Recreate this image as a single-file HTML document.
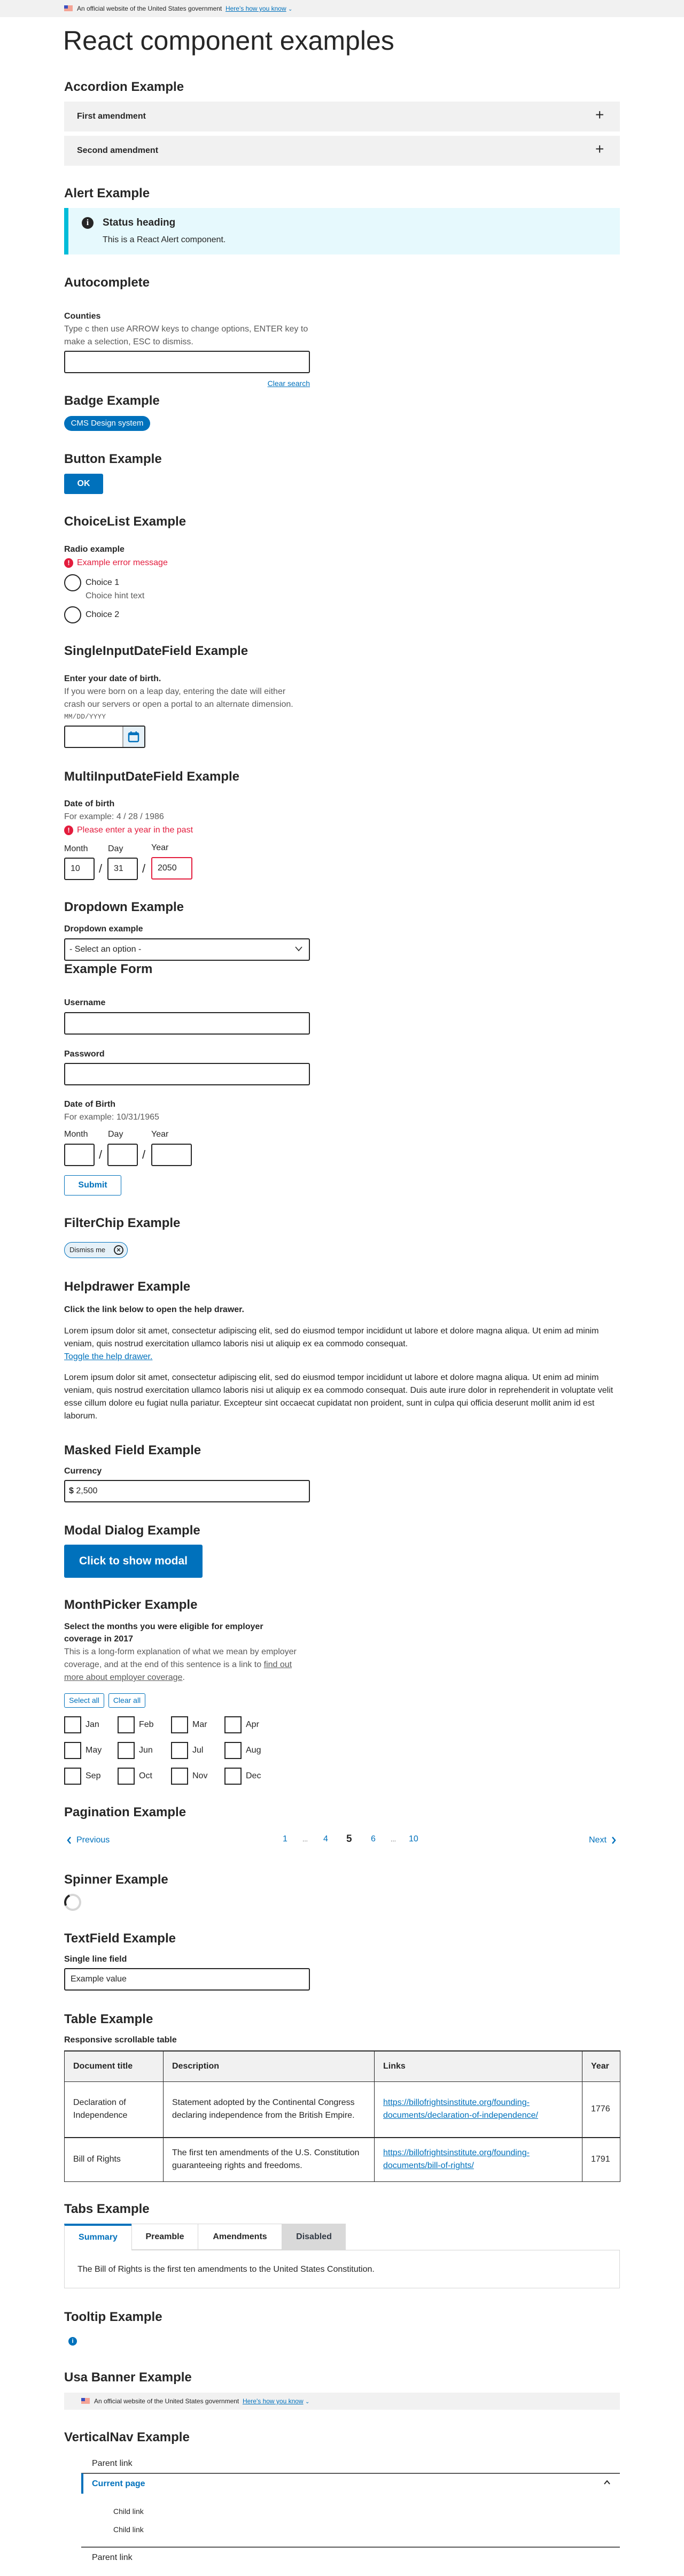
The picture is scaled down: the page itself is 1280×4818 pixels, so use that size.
<!DOCTYPE html>
<html><head><meta charset="utf-8">
<style>
*{box-sizing:border-box;margin:0;padding:0}
html,body{width:1280px;height:4818px;background:#fff;overflow:hidden}
body{position:relative;font-family:"Liberation Sans",Arial,sans-serif;color:#262626;font-size:16px}
.a{position:absolute;white-space:nowrap}
h2{position:absolute;left:120px;font-size:24px;font-weight:700;line-height:30px;white-space:nowrap}
.lb{position:absolute;left:120px;font-weight:700;font-size:16px;line-height:24px;white-space:nowrap}
.h{position:absolute;left:120px;color:#5a5a5a;font-size:16px;line-height:24px;white-space:nowrap}
.in{position:absolute;left:120px;width:460px;height:42px;border:2px solid #262626;border-radius:3px;background:#fff}
.err{position:absolute;left:120px;color:#e31c3d;font-size:16px;line-height:24px;white-space:nowrap;padding-left:24px}
.err:before{content:"!";position:absolute;left:0;top:3px;width:17px;height:18px;border-radius:50%;background:#e31c3d;color:#fff;font-weight:700;font-size:13px;line-height:18px;text-align:center}
.box{position:absolute;height:42px;border:2px solid #262626;border-radius:3px;background:#fff;font-size:16px;line-height:38px;padding-left:10px}
.sl{position:absolute;font-size:22px;line-height:30px;color:#262626}
.cb{position:absolute;width:32px;height:32px;border:2px solid #262626;background:#fff}
.cbl{position:absolute;font-size:16px;line-height:24px}
a,.lk{color:#0071bc;text-decoration:underline}
table.t{position:absolute;white-space:normal;table-layout:fixed}
td,th{border:1px solid #262626;vertical-align:middle;text-align:left;padding:0 16px;font-size:16px;line-height:24px;overflow-wrap:anywhere}
th{background:#f1f1f1;font-weight:700}
</style></head><body>

<div class="a" style="left:0;top:0;width:1280px;height:32px;background:#f1f1f1"></div>
<div class="a" style="left:120px;top:10px;width:16px;height:11px;background:#f4a395"><div style="width:7px;height:6px;background:#3b4fbf"></div></div>
<div class="a" style="left:144px;top:8px;font-size:12px;line-height:16px;color:#262626">An official website of the United States government&nbsp; <span class="lk">Here's how you know</span> <span style="color:#0071bc;font-size:10px">&#8964;</span></div>

<div class="a" style="left:118px;top:46px;font-size:50px;line-height:60px;color:#262626">React component examples</div>

<h2 style="top:148px">Accordion Example</h2>
<div class="a" style="left:120px;top:190px;width:1040px;height:56px;background:#f1f1f1"></div>
<div class="a" style="left:144px;top:207px;font-weight:700;line-height:22px">First amendment</div>
<div class="a" style="left:1114px;top:200px;font-size:28px;line-height:30px">+</div>
<div class="a" style="left:120px;top:254px;width:1040px;height:56px;background:#f1f1f1"></div>
<div class="a" style="left:144px;top:271px;font-weight:700;line-height:22px">Second amendment</div>
<div class="a" style="left:1114px;top:264px;font-size:28px;line-height:30px">+</div>

<h2 style="top:347px">Alert Example</h2>
<div class="a" style="left:120px;top:389px;width:1040px;height:87px;background:#e6f9fd;border-left:8px solid #00bcd9"></div>
<div class="a" style="left:153px;top:406px;width:22px;height:22px;border-radius:50%;background:#262626;color:#fff;font-weight:700;font-family:'Liberation Serif',serif;font-size:16px;line-height:22px;text-align:center">i</div>
<div class="a" style="left:192px;top:405px;font-weight:700;font-size:19px;line-height:24px">Status heading</div>
<div class="a" style="left:192px;top:437px;line-height:24px">This is a React Alert component.</div>

<h2 style="top:514px">Autocomplete</h2>
<div class="lb" style="top:580px">Counties</div>
<div class="h" style="top:604px">Type c then use ARROW keys to change options, ENTER key to</div>
<div class="h" style="top:628px">make a selection, ESC to dismiss.</div>
<div class="in" style="top:656px"></div>
<div class="a" style="left:480px;width:100px;text-align:right;top:708px;font-size:14px;line-height:18px"><span class="lk">Clear search</span></div>

<h2 style="top:735px">Badge Example</h2>
<div class="a" style="left:120px;top:778px;width:161px;height:28px;border-radius:14px;background:#0071bc;color:#fff;font-size:15px;line-height:28px;text-align:center">CMS Design system</div>

<h2 style="top:844px">Button Example</h2>
<div class="a" style="left:120px;top:886px;width:73px;height:38px;background:#0071bc;color:#fff;font-weight:700;font-size:16px;line-height:38px;text-align:center;border-radius:3px">OK</div>

<h2 style="top:961px">ChoiceList Example</h2>
<div class="lb" style="top:1016px">Radio example</div>
<div class="err" style="top:1041px">Example error message</div>
<div class="a" style="left:120px;top:1074px;width:32px;height:32px;border:2px solid #262626;border-radius:50%"></div>
<div class="a" style="left:160px;top:1078px;line-height:24px">Choice 1</div>
<div class="h" style="left:160px;top:1103px">Choice hint text</div>
<div class="a" style="left:120px;top:1134px;width:32px;height:32px;border:2px solid #262626;border-radius:50%"></div>
<div class="a" style="left:160px;top:1138px;line-height:24px">Choice 2</div>

<h2 style="top:1203px">SingleInputDateField Example</h2>
<div class="lb" style="top:1258px">Enter your date of birth.</div>
<div class="h" style="top:1282px">If you were born on a leap day, entering the date will either</div>
<div class="h" style="top:1306px">crash our servers or open a portal to an alternate dimension.</div>
<div class="h" style="top:1332px;font-family:'Liberation Mono',monospace;font-size:13px;line-height:18px">MM/DD/YYYY</div>
<div class="a" style="left:120px;top:1357px;width:152px;height:42px;border:2px solid #262626;border-radius:3px;background:#fff;overflow:hidden">
 <div style="position:absolute;left:107px;top:0;width:41px;height:38px;background:#e6f1f8;border-left:2px solid #a6a6a6"></div>
 <svg style="position:absolute;left:117px;top:8px" width="22" height="22" viewBox="0 0 22 22"><rect x="2" y="4" width="18" height="16" rx="2" fill="none" stroke="#0071bc" stroke-width="2.5"/><rect x="2" y="4" width="18" height="4" fill="#0071bc"/><rect x="5" y="1" width="2.5" height="5" fill="#0071bc"/><rect x="14.5" y="1" width="2.5" height="5" fill="#0071bc"/></svg>
</div>

<h2 style="top:1438px">MultiInputDateField Example</h2>
<div class="lb" style="top:1492px">Date of birth</div>
<div class="h" style="top:1516px">For example: 4 / 28 / 1986</div>
<div class="err" style="top:1541px">Please enter a year in the past</div>
<div class="a" style="left:120px;top:1576px;line-height:24px">Month</div>
<div class="a" style="left:202px;top:1576px;line-height:24px">Day</div>
<div class="a" style="left:283px;top:1574px;line-height:24px">Year</div>
<div class="box" style="left:120px;top:1604px;width:57px">10</div>
<div class="sl" style="left:185px;top:1610px">/</div>
<div class="box" style="left:201px;top:1604px;width:57px">31</div>
<div class="sl" style="left:266px;top:1610px">/</div>
<div class="box" style="left:283px;top:1603px;width:77px;border-color:#e31c3d">2050</div>

<h2 style="top:1682px">Dropdown Example</h2>
<div class="lb" style="top:1726px">Dropdown example</div>
<div class="in" style="top:1755px;line-height:38px;padding-left:8px">- Select an option -
 <svg style="position:absolute;right:12px;top:13px" width="14" height="10" viewBox="0 0 14 10"><path d="M1 1l6 7 6-7" fill="none" stroke="#262626" stroke-width="1.6"/></svg></div>
<h2 style="top:1798px">Example Form</h2>
<div class="lb" style="top:1864px">Username</div>
<div class="in" style="top:1893px"></div>
<div class="lb" style="top:1960px">Password</div>
<div class="in" style="top:1988px"></div>
<div class="lb" style="top:2054px">Date of Birth</div>
<div class="h" style="top:2078px">For example: 10/31/1965</div>
<div class="a" style="left:120px;top:2110px;line-height:24px">Month</div>
<div class="a" style="left:202px;top:2110px;line-height:24px">Day</div>
<div class="a" style="left:283px;top:2110px;line-height:24px">Year</div>
<div class="box" style="left:120px;top:2139px;width:57px"></div>
<div class="sl" style="left:185px;top:2145px">/</div>
<div class="box" style="left:201px;top:2139px;width:57px"></div>
<div class="sl" style="left:266px;top:2145px">/</div>
<div class="box" style="left:283px;top:2139px;width:76px"></div>
<div class="a" style="left:120px;top:2198px;width:107px;height:38px;border:1px solid #0071bc;border-radius:3px;color:#0071bc;font-weight:700;text-align:center;line-height:36px">Submit</div>

<h2 style="top:2273px">FilterChip Example</h2>
<div class="a" style="left:120px;top:2323px;width:119px;height:30px;border:1px solid #0071bc;border-radius:15px;background:#e6f1f8;font-size:13px;line-height:28px;padding-left:9px;color:#262626">Dismiss me
 <span style="position:absolute;left:92px;top:5px;width:18px;height:18px;border:2px solid #262626;border-radius:50%;font-size:13px;line-height:14px;text-align:center;font-weight:700">&#215;</span></div>

<h2 style="top:2392px">Helpdrawer Example</h2>
<div class="lb" style="top:2438px">Click the link below to open the help drawer.</div>
<div class="a" style="left:120px;top:2478px;width:1040px;line-height:24px;white-space:normal;font-size:16px">Lorem ipsum dolor sit amet, consectetur adipiscing elit, sed do eiusmod tempor incididunt ut labore et dolore magna aliqua. Ut enim ad minim veniam, quis nostrud exercitation ullamco laboris nisi ut aliquip ex ea commodo consequat.<br><span class="lk">Toggle the help drawer.</span></div>
<div class="a" style="left:120px;top:2565px;width:1040px;line-height:24px;white-space:normal;font-size:16px">Lorem ipsum dolor sit amet, consectetur adipiscing elit, sed do eiusmod tempor incididunt ut labore et dolore magna aliqua. Ut enim ad minim veniam, quis nostrud exercitation ullamco laboris nisi ut aliquip ex ea commodo consequat. Duis aute irure dolor in reprehenderit in voluptate velit esse cillum dolore eu fugiat nulla pariatur. Excepteur sint occaecat cupidatat non proident, sunt in culpa qui officia deserunt mollit anim id est laborum.</div>

<h2 style="top:2698px">Masked Field Example</h2>
<div class="lb" style="top:2740px">Currency</div>
<div class="in" style="top:2768px;line-height:38px;padding-left:7px"><b>$</b> 2,500</div>

<h2 style="top:2848px">Modal Dialog Example</h2>
<div class="a" style="left:120px;top:2889px;width:259px;height:62px;background:#0071bc;border-radius:3px;color:#fff;font-weight:700;font-size:21px;line-height:62px;text-align:center">Click to show modal</div>

<h2 style="top:2987px">MonthPicker Example</h2>
<div class="lb" style="top:3031px">Select the months you were eligible for employer</div>
<div class="lb" style="top:3054px">coverage in 2017</div>
<div class="h" style="top:3078px">This is a long-form explanation of what we mean by employer</div>
<div class="h" style="top:3102px">coverage, and at the end of this sentence is a link to <u>find out</u></div>
<div class="h" style="top:3126px"><u>more about employer coverage</u>.</div>
<div class="a" style="left:120px;top:3167px;width:75px;height:27px;border:1px solid #0071bc;border-radius:3px;color:#0071bc;font-size:14px;line-height:25px;text-align:center">Select all</div>
<div class="a" style="left:203px;top:3167px;width:69px;height:27px;border:1px solid #0071bc;border-radius:3px;color:#0071bc;font-size:14px;line-height:25px;text-align:center">Clear all</div>

<div class="cb" style="left:120px;top:3210px"></div><div class="cbl" style="left:160px;top:3214px">Jan</div>
<div class="cb" style="left:220px;top:3210px"></div><div class="cbl" style="left:260px;top:3214px">Feb</div>
<div class="cb" style="left:320px;top:3210px"></div><div class="cbl" style="left:360px;top:3214px">Mar</div>
<div class="cb" style="left:420px;top:3210px"></div><div class="cbl" style="left:460px;top:3214px">Apr</div>
<div class="cb" style="left:120px;top:3258px"></div><div class="cbl" style="left:160px;top:3262px">May</div>
<div class="cb" style="left:220px;top:3258px"></div><div class="cbl" style="left:260px;top:3262px">Jun</div>
<div class="cb" style="left:320px;top:3258px"></div><div class="cbl" style="left:360px;top:3262px">Jul</div>
<div class="cb" style="left:420px;top:3258px"></div><div class="cbl" style="left:460px;top:3262px">Aug</div>
<div class="cb" style="left:120px;top:3306px"></div><div class="cbl" style="left:160px;top:3310px">Sep</div>
<div class="cb" style="left:220px;top:3306px"></div><div class="cbl" style="left:260px;top:3310px">Oct</div>
<div class="cb" style="left:320px;top:3306px"></div><div class="cbl" style="left:360px;top:3310px">Nov</div>
<div class="cb" style="left:420px;top:3306px"></div><div class="cbl" style="left:460px;top:3310px">Dec</div>

<h2 style="top:3375px">Pagination Example</h2>
<svg class="a" style="left:124px;top:3434px" width="10" height="16" viewBox="0 0 10 16"><path d="M8 2L3 8l5 6" fill="none" stroke="#0071bc" stroke-width="2.5"/></svg>
<div class="a" style="left:143px;top:3430px;color:#0071bc;line-height:24px">Previous</div>
<div class="a" style="left:529px;top:3428px;color:#0071bc;line-height:24px">1</div>
<div class="a" style="left:566px;top:3428px;color:#5a5a5a;line-height:24px;font-size:12px">...</div>
<div class="a" style="left:605px;top:3428px;color:#0071bc;line-height:24px">4</div>
<div class="a" style="left:648px;top:3428px;font-weight:700;font-size:19px;line-height:24px">5</div>
<div class="a" style="left:694px;top:3428px;color:#0071bc;line-height:24px">6</div>
<div class="a" style="left:731px;top:3428px;color:#5a5a5a;line-height:24px;font-size:12px">...</div>
<div class="a" style="left:765px;top:3428px;color:#0071bc;line-height:24px">10</div>
<div class="a" style="left:1102px;top:3430px;color:#0071bc;line-height:24px">Next</div>
<svg class="a" style="left:1144px;top:3434px" width="10" height="16" viewBox="0 0 10 16"><path d="M2 2l5 6-5 6" fill="none" stroke="#0071bc" stroke-width="2.5"/></svg>

<h2 style="top:3501px">Spinner Example</h2>
<div class="a" style="left:120px;top:3542px;width:32px;height:32px;border-radius:50%;border:4px solid #d6d6d6;border-left-color:#262626;transform:rotate(20deg)"></div>

<h2 style="top:3611px">TextField Example</h2>
<div class="lb" style="top:3653px">Single line field</div>
<div class="in" style="top:3681px;line-height:38px;padding-left:10px">Example value</div>

<h2 style="top:3762px">Table Example</h2>
<div class="lb" style="top:3804px">Responsive scrollable table</div>
<table class="t" style="left:120px;top:3835px;width:1040px;border-collapse:collapse;border-top:2px solid #262626">
<colgroup><col style="width:185px"><col style="width:395px"><col style="width:389px"><col style="width:71px"></colgroup>
<tr style="height:57px"><th>Document title</th><th>Description</th><th>Links</th><th>Year</th></tr>
<tr style="height:105px"><td>Declaration of Independence</td><td>Statement adopted by the Continental Congress declaring independence from the British Empire.</td><td><a>https://billofrightsinstitute.org/founding-documents/declaration-of-independence/</a></td><td>1776</td></tr>
<tr style="height:82px;border-top:2px solid #262626"><td>Bill of Rights</td><td>The first ten amendments of the U.S. Constitution guaranteeing rights and freedoms.</td><td><a>https://billofrightsinstitute.org/founding-documents/bill-of-rights/</a></td><td>1791</td></tr>
</table>

<h2 style="top:4117px">Tabs Example</h2>
<div class="a" style="left:120px;top:4208px;width:1040px;height:72px;border:1px solid #d6d6d6"></div>
<div class="a" style="left:120px;top:4159px;width:126px;height:50px;border-top:4px solid #0071bc;border-left:1px solid #d6d6d6;background:#fff;color:#0071bc;font-weight:700;text-align:center;line-height:44px">Summary</div>
<div class="a" style="left:246px;top:4159px;width:125px;height:49px;border:1px solid #d6d6d6;font-weight:700;text-align:center;line-height:47px">Preamble</div>
<div class="a" style="left:371px;top:4159px;width:157px;height:49px;border:1px solid #d6d6d6;border-left:none;font-weight:700;text-align:center;line-height:47px">Amendments</div>
<div class="a" style="left:528px;top:4159px;width:119px;height:49px;background:#d9d9d9;color:#323a45;font-weight:700;text-align:center;line-height:49px">Disabled</div>
<div class="a" style="left:145px;top:4233px;line-height:24px">The Bill of Rights is the first ten amendments to the United States Constitution.</div>

<h2 style="top:4319px">Tooltip Example</h2>
<div class="a" style="left:128px;top:4371px;width:16px;height:16px;border-radius:50%;background:#0071bc;color:#fff;font-weight:700;font-size:11px;line-height:16px;text-align:center">i</div>

<h2 style="top:4432px">Usa Banner Example</h2>
<div class="a" style="left:120px;top:4475px;width:1040px;height:32px;background:#f1f1f1"></div>
<div class="a" style="left:152px;top:4485px;width:16px;height:11px;background:#f4a395"><div style="width:7px;height:6px;background:#3b4fbf"></div></div>
<div class="a" style="left:176px;top:4483px;font-size:12px;line-height:16px">An official website of the United States government&nbsp; <span class="lk">Here's how you know</span> <span style="color:#0071bc;font-size:10px">&#8964;</span></div>

<h2 style="top:4544px">VerticalNav Example</h2>
<div class="a" style="left:172px;top:4596px;line-height:24px">Parent link</div>
<div class="a" style="left:152px;top:4625px;width:1008px;border-top:2px solid #5a5a5a"></div>
<div class="a" style="left:152px;top:4626px;width:4px;height:38px;background:#0071bc"></div>
<div class="a" style="left:172px;top:4634px;line-height:24px;color:#0071bc;font-weight:700">Current page</div>
<svg class="a" style="left:1130px;top:4638px" width="12" height="9" viewBox="0 0 12 9"><path d="M1 8l5-6 5 6" fill="none" stroke="#262626" stroke-width="2"/></svg>
<div class="a" style="left:212px;top:4687px;font-size:14px;line-height:20px">Child link</div>
<div class="a" style="left:212px;top:4721px;font-size:14px;line-height:20px">Child link</div>
<div class="a" style="left:152px;top:4763px;width:1008px;border-top:2px solid #5a5a5a"></div>
<div class="a" style="left:172px;top:4772px;line-height:24px">Parent link</div>

</body></html>
